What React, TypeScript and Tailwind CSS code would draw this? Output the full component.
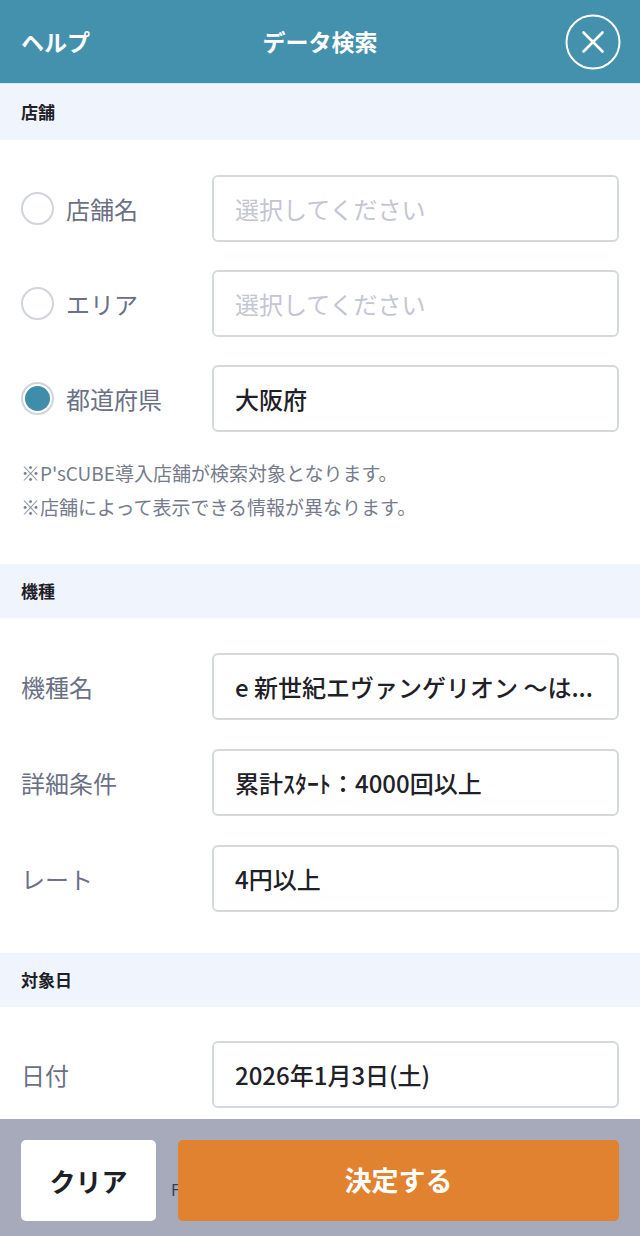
import React from "react";

const font = { fontFamily: '"Noto Sans CJK JP", "Noto Sans", sans-serif' };

function Box({ children, placeholder }: { children?: React.ReactNode; placeholder?: boolean }) {
  return (
    <div
      className={`flex-1 h-[67px] border-2 border-[#d6d8df] rounded-[6px] bg-white flex items-center pl-[21px] pr-[10px] text-[24px] overflow-hidden whitespace-nowrap ${
        placeholder ? "text-[#c3c6d2]" : "text-[#1f2128] font-medium"
      }`}
    >
      {children}
    </div>
  );
}

function Radio({ checked }: { checked?: boolean }) {
  return (
    <div className="w-[33px] h-[33px] rounded-full border-2 border-[#d2d4dc] bg-white flex items-center justify-center shrink-0">
      {checked && <div className="w-[25px] h-[25px] rounded-full bg-[#3f8ea9]" />}
    </div>
  );
}

function SectionHeader({ title, h }: { title: string; h: string }) {
  return (
    <div className={`${h} bg-[#f0f4fc] flex items-center px-[21px] text-[17px] font-bold text-[#1e2028]`}>
      {title}
    </div>
  );
}

function RadioRow({ label, checked, children, placeholder }: { label: string; checked?: boolean; children: React.ReactNode; placeholder?: boolean }) {
  return (
    <div className="flex items-center pr-[21px]">
      <div className="w-[212px] pl-[21px] flex items-center gap-[12px]">
        <Radio checked={checked} />
        <span className="text-[24px] text-[#6b7084]">{label}</span>
      </div>
      <Box placeholder={placeholder}>{children}</Box>
    </div>
  );
}

function Row({ label, children }: { label: string; children: React.ReactNode }) {
  return (
    <div className="flex items-center pr-[21px]">
      <div className="w-[212px] pl-[21px] text-[24px] text-[#6b7084]">{label}</div>
      <Box>{children}</Box>
    </div>
  );
}

export default function App() {
  return (
    <div className="w-[640px] h-[1236px] bg-white relative overflow-hidden" style={font}>
      <header className="h-[84px] bg-[#4391ac] grid grid-cols-3 items-center px-[21px] text-white border-b border-[#cfeaf2]">
        <span className="text-[23px] font-bold justify-self-start">ヘルプ</span>
        <span className="text-[23px] font-bold justify-self-center">データ検索</span>
        <div className="justify-self-end">
          <svg width="56" height="56" viewBox="0 0 56 56" className="mr-[-2px]">
            <circle cx="28" cy="28" r="26.5" fill="none" stroke="white" strokeWidth="2" />
            <path d="M18.5 18.5 L37.5 37.5 M37.5 18.5 L18.5 37.5" stroke="white" strokeWidth="2.6" strokeLinecap="round" />
          </svg>
        </div>
      </header>

      <SectionHeader title="店舗" h="h-[56px]" />
      <div className="pt-[35px] pb-[40px] flex flex-col">
        <div className="flex flex-col gap-[28px]">
          <RadioRow label="店舗名" placeholder>選択してください</RadioRow>
          <RadioRow label="エリア" placeholder>選択してください</RadioRow>
          <RadioRow label="都道府県" checked>大阪府</RadioRow>
        </div>
        <div className="mt-[24px] px-[21px] text-[19px] leading-[34px] text-[#767b8c]">
          <p>※P'sCUBE導入店舗が検索対象となります。</p>
          <p>※店舗によって表示できる情報が異なります。</p>
        </div>
      </div>

      <SectionHeader title="機種" h="h-[54px]" />
      <div className="pt-[35px] pb-[41px] flex flex-col gap-[29px]">
        <Row label="機種名">e 新世紀エヴァンゲリオン ～は...</Row>
        <Row label="詳細条件">累計ｽﾀｰﾄ：4000回以上</Row>
        <Row label="レート">4円以上</Row>
      </div>

      <SectionHeader title="対象日" h="h-[54px]" />
      <div className="pt-[34px] flex flex-col">
        <Row label="日付">2026年1月3日(土)</Row>
      </div>

      <footer className="absolute left-0 right-0 bottom-0 h-[117px] bg-[#a7aaba] flex px-[21px] pt-[21px] gap-[22px]">
        <span className="absolute left-[171px] top-[58px] text-[16px] text-[#3a3d4a]">F</span>
        <button className="relative w-[135px] h-[81px] bg-white rounded-[5px] text-[26px] font-bold text-[#1e2028]">クリア</button>
        <button className="relative flex-1 h-[81px] bg-[#e0822f] rounded-[5px] text-[27px] font-bold text-white">決定する</button>
      </footer>
    </div>
  );
}
